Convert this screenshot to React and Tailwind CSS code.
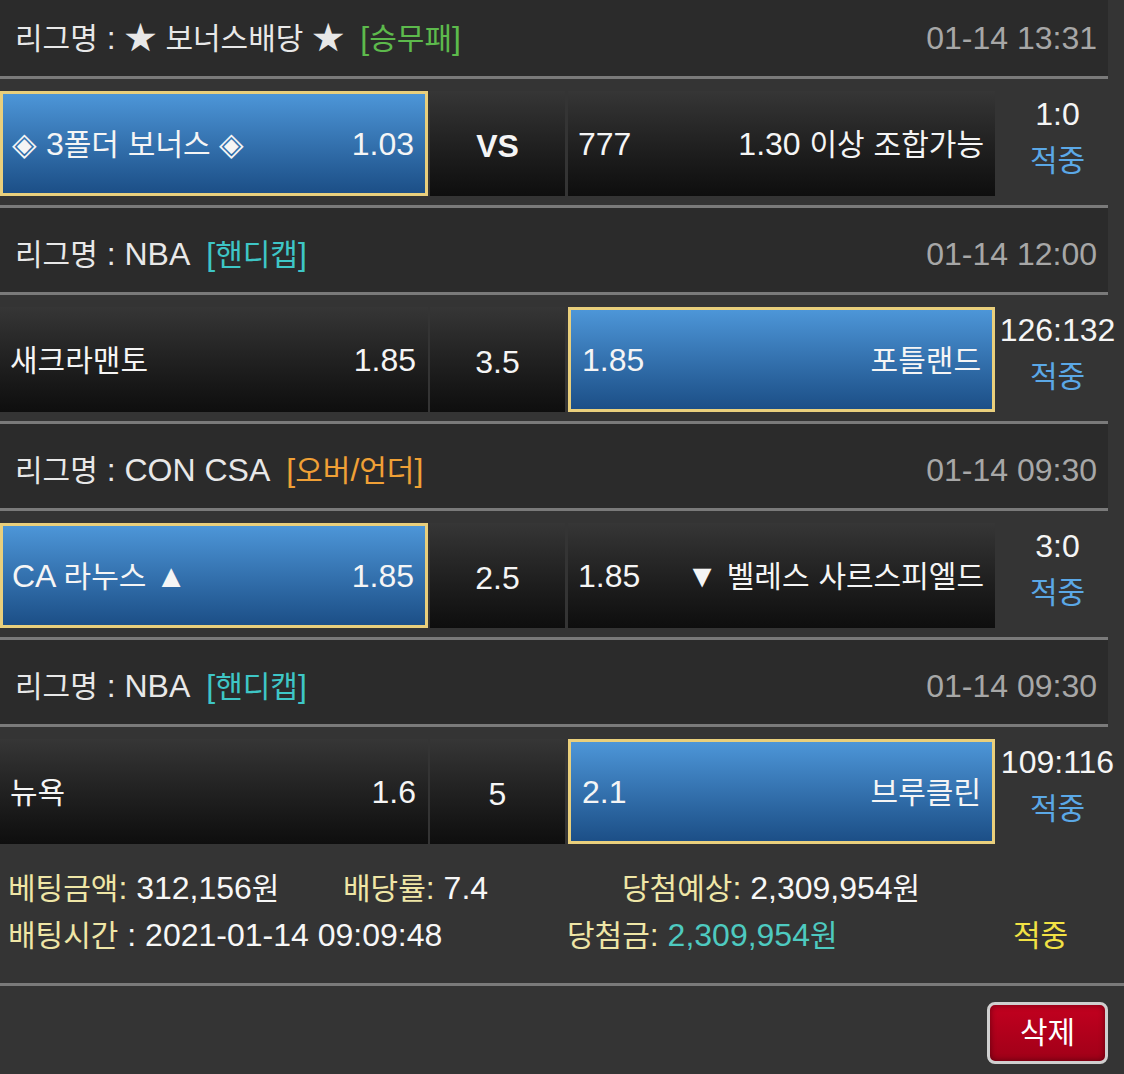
import React from 'react';

const MATCHES = [
  {
    league: '★ 보너스배당 ★',
    tag: '[승무패]',
    tagClass: 'text-[#5dba4c]',
    date: '01-14 13:31',
    home: '◈ 3폴더 보너스 ◈',
    homeOdd: '1.03',
    mid: 'VS',
    awayOdd: '777',
    away: '1.30 이상 조합가능',
    pick: 'home',
    score: '1:0',
  },
  {
    league: 'NBA',
    tag: '[핸디캡]',
    tagClass: 'text-[#3ec6c6]',
    date: '01-14 12:00',
    home: '새크라맨토',
    homeOdd: '1.85',
    mid: '3.5',
    awayOdd: '1.85',
    away: '포틀랜드',
    pick: 'away',
    score: '126:132',
  },
  {
    league: 'CON CSA',
    tag: '[오버/언더]',
    tagClass: 'text-[#f0a036]',
    date: '01-14 09:30',
    home: 'CA 라누스 ▲',
    homeOdd: '1.85',
    mid: '2.5',
    awayOdd: '1.85',
    away: '▼ 벨레스 사르스피엘드',
    pick: 'home',
    score: '3:0',
  },
  {
    league: 'NBA',
    tag: '[핸디캡]',
    tagClass: 'text-[#3ec6c6]',
    date: '01-14 09:30',
    home: '뉴욕',
    homeOdd: '1.6',
    mid: '5',
    awayOdd: '2.1',
    away: '브루클린',
    pick: 'away',
    score: '109:116',
  },
];

// hangul gets its own size so it keeps the width of the original font
function T({ children }) {
  const parts = String(children).split(/([\uAC00-\uD7A3]+)/);
  return parts.map((p, i) =>
    /[\uAC00-\uD7A3]/.test(p) ? (
      <span key={i} className="text-[30px]">
        {p}
      </span>
    ) : (
      <React.Fragment key={i}>{p}</React.Fragment>
    )
  );
}

function Line({ full = false }) {
  return <div className={full ? 'h-[3px] w-full bg-[#7a7a7a]' : 'h-[3px] w-[1108px] bg-[#7a7a7a]'} />;
}

function LeagueHeader({ m }) {
  return (
    <div className="flex h-[84px] w-[1108px] items-center justify-between bg-[#2b2b2b] pl-[15px] pr-[11px] pt-[7px] leading-none">
      <div className="text-[#e8e8e8]">
        <T>리그명</T> : <T>{m.league}</T>
        <span className={`ml-4 ${m.tagClass}`}>
          <T>{m.tag}</T>
        </span>
      </div>
      <div className="text-[#a7a7a7]">{m.date}</div>
    </div>
  );
}

function Cell({ selected, className, children }) {
  return (
    <div
      className={
        selected
          ? `flex h-[105px] items-center justify-between border-[3px] border-[#e9cf7c] bg-gradient-to-b from-[#4d96d8] to-[#1c4f87] ${className}`
          : `flex h-[105px] items-center justify-between bg-gradient-to-b from-[#363636] to-[#0e0e0e] ${className}`
      }
    >
      {children}
    </div>
  );
}

function MatchRow({ m }) {
  const homeSel = m.pick === 'home';
  const awaySel = m.pick === 'away';
  return (
    <div className="flex h-[126px] pt-[12px] leading-none text-[#f5f5f5]">
      <Cell selected={homeSel} className={homeSel ? 'w-[428px] pl-[9px] pr-[11px]' : 'w-[428px] pl-[10px] pr-[12px]'}>
        <span>
          <T>{m.home}</T>
        </span>
        <span>{m.homeOdd}</span>
      </Cell>
      <div className="w-[2px]" />
      <Cell className="w-[135px] justify-center pt-1">
        <span className={m.mid === 'VS' ? 'font-bold' : ''}>{m.mid}</span>
      </Cell>
      <div className="w-[3px]" />
      <Cell selected={awaySel} className={awaySel ? 'w-[427px] pl-[11px] pr-[11px]' : 'w-[427px] pl-[10px] pr-[11px]'}>
        <span>{m.awayOdd}</span>
        <span>
          <T>{m.away}</T>
        </span>
      </Cell>
      <div className="flex w-[125px] flex-col items-center leading-[46px]">
        <span className="h-[46px]">{m.score}</span>
        <span className="h-[46px] text-[#5ba8e6]">
          <T>적중</T>
        </span>
      </div>
    </div>
  );
}

export default function App() {
  return (
    <div className="h-[1074px] w-[1124px] overflow-hidden bg-[#343434] font-['Liberation_Sans','Noto_Sans_CJK_KR',sans-serif] text-[32px]">
      <div className="-mt-2">
        {MATCHES.map((m, i) => (
          <React.Fragment key={i}>
            <LeagueHeader m={m} />
            <Line />
            <MatchRow m={m} />
            {i < MATCHES.length - 1 && <Line />}
          </React.Fragment>
        ))}
      </div>

      {/* Summary */}
      <div className="pl-2 pt-[12px] pb-[24px] leading-[46px] text-[#f7f7f7]">
        <div className="flex">
          <span className="w-[335px]">
            <span className="text-[#efe6a6]">
              <T>베팅금액:</T>
            </span>{' '}
            <T>312,156원</T>
          </span>
          <span className="w-[279px]">
            <span className="text-[#efe6a6]">
              <T>배당률:</T>
            </span>{' '}
            7.4
          </span>
          <span>
            <span className="text-[#efe6a6]">
              <T>당첨예상:</T>
            </span>{' '}
            <T>2,309,954원</T>
          </span>
        </div>
        <div className="flex">
          <span className="w-[559px]">
            <span className="text-[#efe6a6]">
              <T>배팅시간</T>
            </span>{' '}
            : 2021-01-14 09:09:48
          </span>
          <span className="w-[446px]">
            <span className="text-[#efe6a6]">
              <T>당첨금:</T>
            </span>{' '}
            <span className="text-[#4ecac0]">
              <T>2,309,954원</T>
            </span>
          </span>
          <span className="text-[#f2e244]">
            <T>적중</T>
          </span>
        </div>
      </div>
      <Line full />
      <div className="flex justify-end pr-4 pt-4">
        <button className="flex h-[62px] w-[121px] items-center justify-center rounded-[8px] border-[3px] border-[#cfcfcf] bg-gradient-to-b from-[#c2001f] to-[#a00018] leading-none text-white shadow-[inset_0_0_6px_rgba(0,0,0,0.45)]">
          <T>삭제</T>
        </button>
      </div>
    </div>
  );
}
